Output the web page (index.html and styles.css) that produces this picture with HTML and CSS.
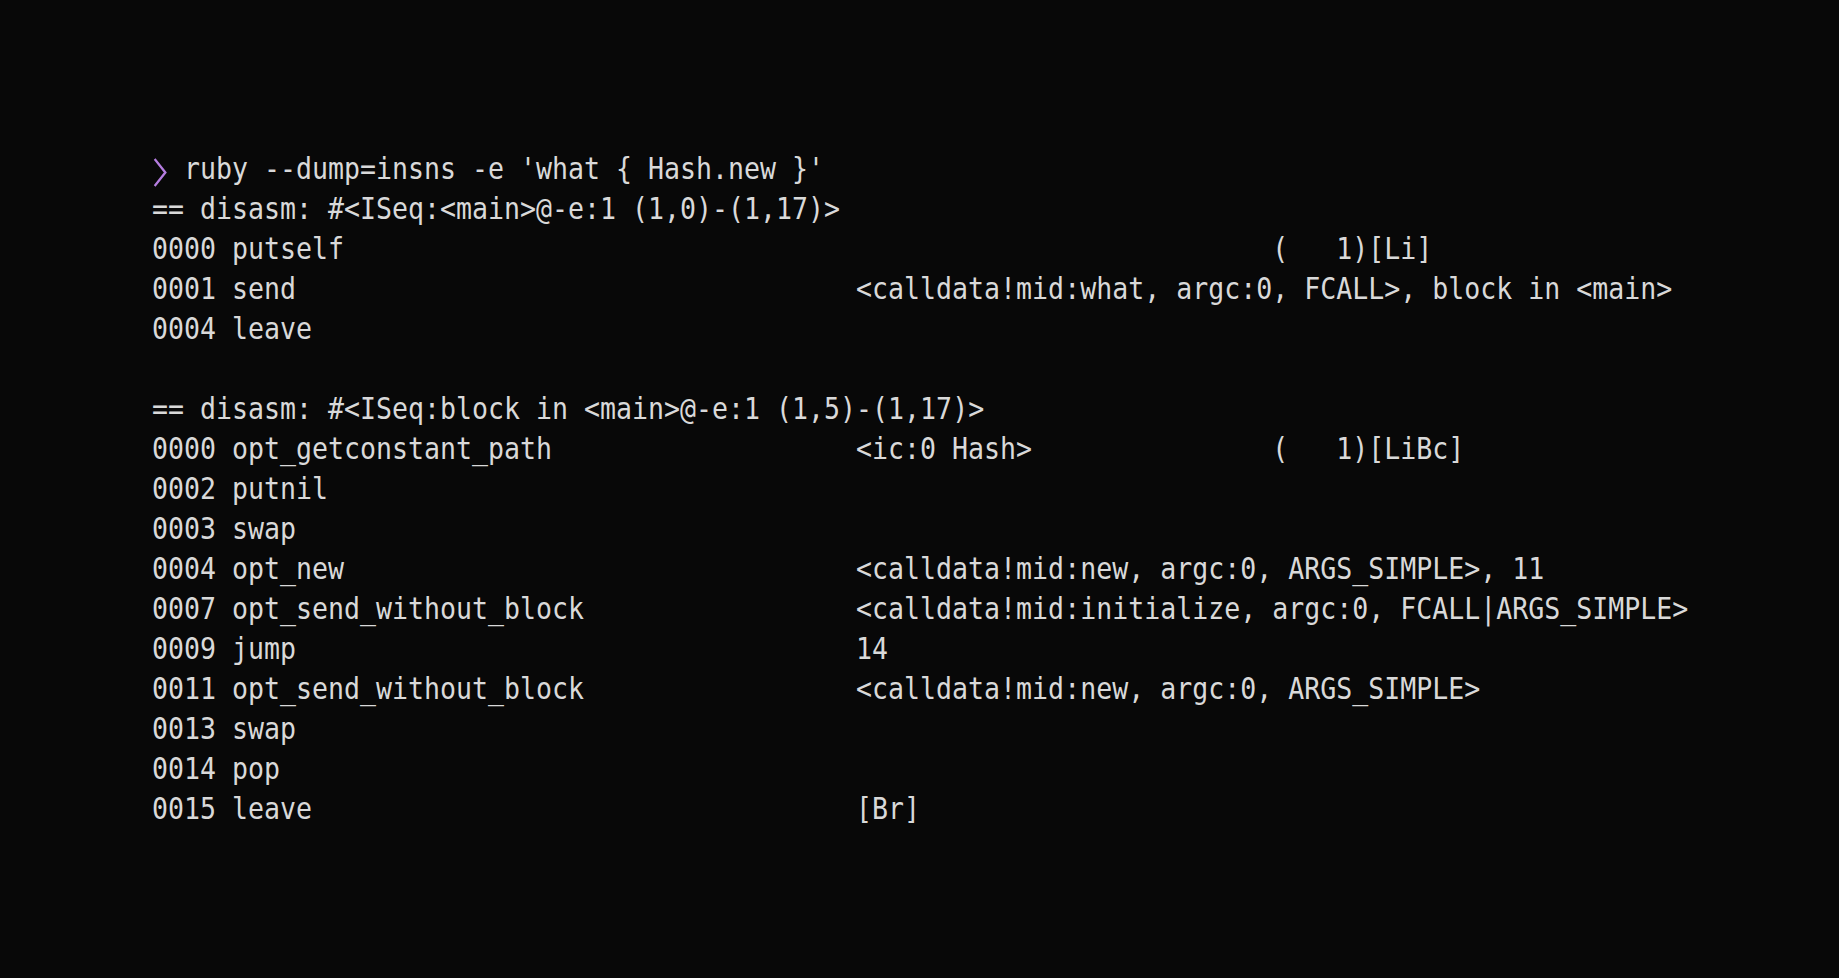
FILE: index.html
```html
<!DOCTYPE html>
<html lang="en">
<head>
<meta charset="utf-8">
<title>ruby --dump=insns</title>
<link rel="stylesheet" href="styles.css">
</head>
<body>
<main class="screen">
  <div class="term">
    <div class="line"><span class="prompt"><svg class="chev" viewBox="0 0 18 40" width="18" height="40"><polyline points="3,10 15,23.5 3,37" fill="none" stroke="#b57de0" stroke-width="2.6" stroke-linejoin="miter"/></svg></span><span class="sp"> </span>ruby --dump=insns -e 'what { Hash.new }'</div>
    <div class="line">== disasm: #&lt;ISeq:&lt;main&gt;@-e:1 (1,0)-(1,17)&gt;</div>
    <div class="line"><span class="addr">0000</span><span class="op">putself</span><span class="args"></span><span class="info">(   1)[Li]</span></div>
    <div class="line"><span class="addr">0001</span><span class="op">send</span><span class="args">&lt;calldata!mid:what, argc:0, FCALL&gt;, block in &lt;main&gt;</span></div>
    <div class="line"><span class="addr">0004</span><span class="op">leave</span></div>
    <div class="line"> </div>
    <div class="line">== disasm: #&lt;ISeq:block in &lt;main&gt;@-e:1 (1,5)-(1,17)&gt;</div>
    <div class="line"><span class="addr">0000</span><span class="op">opt_getconstant_path</span><span class="args">&lt;ic:0 Hash&gt;</span><span class="info">(   1)[LiBc]</span></div>
    <div class="line"><span class="addr">0002</span><span class="op">putnil</span></div>
    <div class="line"><span class="addr">0003</span><span class="op">swap</span></div>
    <div class="line"><span class="addr">0004</span><span class="op">opt_new</span><span class="args">&lt;calldata!mid:new, argc:0, ARGS_SIMPLE&gt;, 11</span></div>
    <div class="line"><span class="addr">0007</span><span class="op">opt_send_without_block</span><span class="args">&lt;calldata!mid:initialize, argc:0, FCALL|ARGS_SIMPLE&gt;</span></div>
    <div class="line"><span class="addr">0009</span><span class="op">jump</span><span class="args">14</span></div>
    <div class="line"><span class="addr">0011</span><span class="op">opt_send_without_block</span><span class="args">&lt;calldata!mid:new, argc:0, ARGS_SIMPLE&gt;</span></div>
    <div class="line"><span class="addr">0013</span><span class="op">swap</span></div>
    <div class="line"><span class="addr">0014</span><span class="op">pop</span></div>
    <div class="line"><span class="addr">0015</span><span class="op">leave</span><span class="args">[Br]</span></div>
  </div>
</main>
</body>
</html>
```

FILE: styles.css
```css
html, body {
  margin: 0;
  padding: 0;
  background: #080808;
}

.screen {
  width: 1839px;
  height: 978px;
  box-sizing: border-box;
  padding: 149px 0 0 152px;
  background: #080808;
  overflow: hidden;
}

.term {
  font-family: "DejaVu Sans Mono", "Liberation Mono", monospace;
  font-size: 30px;
  line-height: 40px;
  color: #d9d9d9;
  transform: scaleX(0.886);
  transform-origin: 0 0;
  width: 1900px;
}

.line {
  display: flex;
  white-space: pre;
  height: 40px;
}

.line > span {
  flex: none;
}

.prompt {
  display: inline-flex;
  width: 1ch;
  height: 40px;
}

.chev {
  display: block;
}

.addr {
  width: 5ch;
}

.op {
  width: 39ch;
}

.args {
  width: 26ch;
}

.info {
  width: auto;
}
```
